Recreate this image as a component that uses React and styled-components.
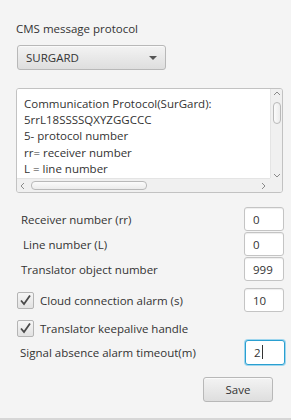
import React from 'react';
import styled, { createGlobalStyle } from 'styled-components';

const GlobalStyle = createGlobalStyle`
  html, body {
    margin: 0;
    padding: 0;
    background: #f4f4f4;
  }
  * { box-sizing: border-box; }
`;

const Page = styled.div`
  width: 291px;
  height: 420px;
  background: #f4f4f4;
  font-family: "Open Sans", "Noto Sans", sans-serif;
  font-size: 11.5px;
  color: #333;
  padding: 21px 7px 0 16px;
  display: flex;
  flex-direction: column;
  border-bottom: 2px solid #d6d6d6;
  overflow: hidden;
`;

const Caption = styled.div`
  line-height: 16px;
  height: 16px;
`;

const Combo = styled.div`
  margin: 8px 0 0 1px;
  width: 149px;
  height: 25px;
  border: 1px solid #b8b8b8;
  border-radius: 3px;
  background: linear-gradient(#f3f3f3, #dedede);
  display: flex;
  align-items: center;
  justify-content: space-between;
  padding: 0 8px 0 8px;
  box-shadow: inset 0 1px 0 #fafafa;
`;

const Arrow = styled.span`
  width: 0;
  height: 0;
  border-left: 4px solid transparent;
  border-right: 4px solid transparent;
  border-top: 4px solid #555;
`;

const TextArea = styled.div`
  margin-top: 18px;
  width: 267px;
  height: 105px;
  border: 1px solid #c2c2c2;
  border-radius: 3px;
  display: grid;
  grid-template-columns: 1fr 12px;
  grid-template-rows: 1fr 14px;
  overflow: hidden;
  background: #f4f4f4;
`;

const AreaText = styled.div`
  background: #fff;
  padding: 7px 0 0 7px;
  line-height: 16.2px;
  white-space: nowrap;
  overflow: hidden;
`;

const VBar = styled.div`
  background: #f0f0f0;
  border-left: 1px solid #e4e4e4;
  display: flex;
  flex-direction: column;
  align-items: center;
  padding-top: 2px;
`;

const HBar = styled.div`
  background: #f0f0f0;
  border-top: 1px solid #e4e4e4;
  display: flex;
  align-items: center;
  padding-left: 3px;
`;

const Corner = styled.div`
  background: #f0f0f0;
`;

const Thumb = styled.div`
  background: linear-gradient(${p => (p.$vertical ? '90deg' : '180deg')}, #fbfbfb, #ececec);
  border: 1px solid #b9b9b9;
  border-radius: 4px;
  width: ${p => p.$w}px;
  height: ${p => p.$h}px;
  margin: ${p => p.$m};
`;

const Spacer = styled.div`
  flex: 1;
`;

const Chevron = styled.svg`
  flex: none;
  display: block;
  margin-right: ${p => p.$mr || 0}px;
`;

const Form = styled.div`
  margin-top: 14px;
  display: flex;
  flex-direction: column;
`;

const Row = styled.div`
  display: flex;
  align-items: center;
  justify-content: space-between;
  height: 24px;
  margin-top: ${p => p.$gap || 0}px;
`;

const Label = styled.span`
  padding-left: ${p => p.$indent || 0}px;
  display: flex;
  align-items: center;
  gap: 6px;
`;

const Input = styled.div`
  width: 40px;
  height: ${p => (p.$focused ? 25 : 24)}px;
  background: #fff;
  border: 1px solid ${p => (p.$focused ? '#2a9fd0' : '#c4c4c4')};
  box-shadow: ${p => (p.$focused ? '0 0 0 1px #9fd6ee' : 'inset 0 1px 1px #eee')};
  border-radius: 3px;
  padding: 0 8px;
  display: flex;
  align-items: center;
  margin-right: ${p => (p.$focused ? -1 : 0)}px;
`;

const Caret = styled.span`
  display: inline-block;
  width: 1px;
  height: 14px;
  background: #333;
  margin-left: 1px;
`;

const Box = styled.span`
  width: 17px;
  height: 17px;
  margin-left: 1px;
  border: 1px solid #b4b4b4;
  border-radius: 2px;
  background: linear-gradient(#f6f6f6, #e2e2e2);
  display: flex;
  align-items: center;
  justify-content: center;
`;

const Footer = styled.div`
  display: flex;
  justify-content: flex-end;
  margin-top: 13px;
  padding-right: 11px;
`;

const Button = styled.div`
  width: 70px;
  height: 25px;
  border: 1px solid #b8b8b8;
  border-radius: 3px;
  background: linear-gradient(#f3f3f3, #dedede);
  box-shadow: inset 0 1px 0 #fafafa;
  display: flex;
  align-items: center;
  justify-content: center;
`;

const Check = () => (
  <Box>
    <svg width="13" height="12" viewBox="0 0 13 12">
      <path d="M2 6.5 L5 10 L11 1.5" fill="none" stroke="#4a4a4a" strokeWidth="1.8" />
    </svg>
  </Box>
);

const chevronPaths = {
  up: 'M1 4 L4 1 L7 4',
  down: 'M1 1 L4 4 L7 1',
  left: 'M4 1 L1 4 L4 7',
  right: 'M1 1 L4 4 L1 7',
};

const Chev = ({ dir, mr }) => {
  const vertical = dir === 'up' || dir === 'down';
  return (
    <Chevron
      $mr={mr}
      width={vertical ? 8 : 5}
      height={vertical ? 5 : 8}
      viewBox={vertical ? '0 0 8 5' : '0 0 5 8'}
    >
      <path d={chevronPaths[dir]} fill="none" stroke="#8a8a8a" strokeWidth="1" />
    </Chevron>
  );
};

const lines = [
  'Communication Protocol(SurGard):',
  '5rrL18SSSSQXYZGGCCC',
  '5- protocol number',
  'rr= receiver number',
  'L = line number',
];

export default function App() {
  return (
    <>
      <GlobalStyle />
      <Page>
        <Caption>CMS message protocol</Caption>
        <Combo>
          <span>SURGARD</span>
          <Arrow />
        </Combo>
        <TextArea>
          <AreaText>
            {lines.map(l => (
              <div key={l}>{l}</div>
            ))}
          </AreaText>
          <VBar>
            <Chev dir="up" />
            <Thumb $vertical $w={8} $h={22} $m="6px 0 0" />
            <Spacer />
            <Chev dir="down" />
          </VBar>
          <HBar>
            <Chev dir="left" />
            <Thumb $w={116} $h={9} $m="0 0 0 6px" />
            <Spacer />
            <Chev dir="right" mr={4} />
          </HBar>
          <Corner />
        </TextArea>
        <Form>
          <Row>
            <Label $indent={5}>Receiver number (rr)</Label>
            <Input>0</Input>
          </Row>
          <Row $gap={1}>
            <Label $indent={7}>Line number (L)</Label>
            <Input>0</Input>
          </Row>
          <Row $gap={1}>
            <Label $indent={5}>Translator object number</Label>
            <Input>999</Input>
          </Row>
          <Row $gap={7}>
            <Label>
              <Check />
              Cloud connection alarm (s)
            </Label>
            <Input>10</Input>
          </Row>
          <Row $gap={4}>
            <Label>
              <Check />
              Translator keepalive handle
            </Label>
          </Row>
          <Row>
            <Label $indent={4}>Signal absence alarm timeout(m)</Label>
            <Input $focused>
              2<Caret />
            </Input>
          </Row>
        </Form>
        <Footer>
          <Button>Save</Button>
        </Footer>
      </Page>
    </>
  );
}
